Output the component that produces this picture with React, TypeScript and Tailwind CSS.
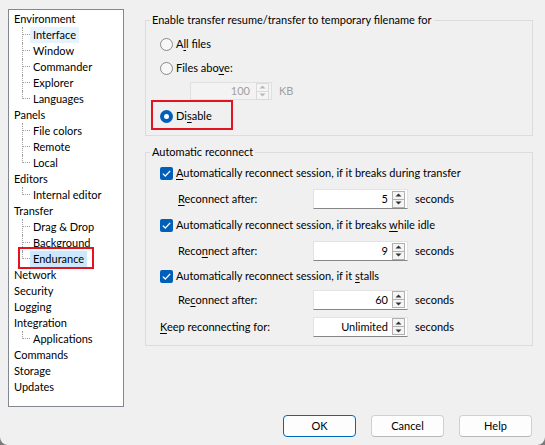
import React from "react";

type TreeNode = { label: string; children?: string[] };

const tree: TreeNode[] = [
  { label: "Environment", children: ["Interface", "Window", "Commander", "Explorer", "Languages"] },
  { label: "Panels", children: ["File colors", "Remote", "Local"] },
  { label: "Editors", children: ["Internal editor"] },
  { label: "Transfer", children: ["Drag & Drop", "Background", "Endurance"] },
  { label: "Network" },
  { label: "Security" },
  { label: "Logging" },
  { label: "Integration", children: ["Applications"] },
  { label: "Commands" },
  { label: "Storage" },
  { label: "Updates" },
];

function ChildRow({ label, last }: { label: string; last: boolean }) {
  const hover = label === "Interface";
  const selected = label === "Endurance";
  return (
    <div className="relative flex h-4 items-start">
      <div className="w-[13px] shrink-0" />
      {last ? (
        <div className="h-[8px] w-[8px] shrink-0 border-b border-l border-dotted border-[#a0a0a0]" />
      ) : (
        <div className="h-4 w-[8px] shrink-0 border-l border-dotted border-[#a0a0a0]">
          <div className="h-[8px] w-[7px] border-b border-dotted border-[#a0a0a0]" />
        </div>
      )}
      <span
        className={
          "h-4 px-[3px] leading-4 " +
          (selected ? "bg-[#cce8ff]" : hover ? "bg-[#e5f3ff]" : "")
        }
      >
        {label}
      </span>
      {selected && (
        <span className="pointer-events-none absolute left-[9px] top-[-4px] h-[22px] w-[76px] border-2 border-[#e3141f]" />
      )}
    </div>
  );
}

function Tree() {
  return (
    <div className="h-[398px] w-[116px] shrink-0 border border-[#828790] bg-white pt-px text-[#000]">
      {tree.map((n) => (
        <div key={n.label}>
          <div className="h-4 pl-[5px] leading-4">{n.label}</div>
          {n.children?.map((c, i) => (
            <ChildRow key={c} label={c} last={i === n.children!.length - 1} />
          ))}
        </div>
      ))}
    </div>
  );
}

function U({ children }: { children: React.ReactNode }) {
  return <span className="underline decoration-1 underline-offset-[2px]">{children}</span>;
}

function Radio({ checked }: { checked?: boolean }) {
  return checked ? (
    <span className="flex h-[13px] w-[13px] shrink-0 items-center justify-center rounded-full bg-[#005fb8]">
      <span className="h-[5px] w-[5px] rounded-full bg-white" />
    </span>
  ) : (
    <span className="h-[13px] w-[13px] shrink-0 rounded-full border border-[#8a8a8a] bg-[#f7f7f7]" />
  );
}

function Check() {
  return (
    <span className="flex h-[13px] w-[13px] shrink-0 items-center justify-center rounded-[2px] bg-[#005fb8]">
      <svg width="9" height="7" viewBox="0 0 9 7" fill="none">
        <path d="M0.8 3.6 L3.3 6 L8.2 0.9" stroke="white" strokeWidth="1.3" />
      </svg>
    </span>
  );
}

function Arrow({ up, color }: { up?: boolean; color: string }) {
  return (
    <svg width="7" height="4" viewBox="0 0 7 4">
      <path d={up ? "M0.5 3.5 L3.5 0.5 L6.5 3.5 Z" : "M0.5 0.5 L3.5 3.5 L6.5 0.5 Z"} fill={color} />
    </svg>
  );
}

function SpinButtons({ disabled }: { disabled?: boolean }) {
  const c = disabled ? "#b8b8b8" : "#333";
  const b = disabled ? "border-[#dadada]" : "border-[#b0b0b0]";
  return (
    <div className="flex shrink-0 flex-col">
      <div className={"flex h-[9px] w-[13px] items-center justify-center border bg-[#f5f5f5] " + b}>
        <Arrow up color={c} />
      </div>
      <div className={"-mt-px flex h-[9px] w-[13px] items-center justify-center border bg-[#f5f5f5] " + b}>
        <Arrow color={c} />
      </div>
    </div>
  );
}

function Spin({ value }: { value: string }) {
  return (
    <div className="flex h-[20px] w-[95px] shrink-0 items-center border border-[#e3e3e3] border-b-[#868686] bg-white pr-[2px]">
      <span className="flex-1 pr-[4px] text-right leading-4">{value}</span>
      <SpinButtons />
    </div>
  );
}

function Row({
  label,
  value,
  className,
  indent = 18,
}: {
  label: React.ReactNode;
  value: string;
  className: string;
  indent?: number;
}) {
  return (
    <div className={"flex items-center " + className}>
      <div className={"w-[153px] shrink-0 " + (indent ? "pl-[18px]" : "")}>{label}</div>
      <Spin value={value} />
      <span className="ml-[7px]">seconds</span>
    </div>
  );
}

function CheckRow({ children, className }: { children: React.ReactNode; className: string }) {
  return (
    <div className={"flex items-center gap-[3px] " + className}>
      <Check />
      <span>{children}</span>
    </div>
  );
}

export default function App() {
  return (
    <div className="h-[445px] w-[545px] bg-[#7a7a7a]">
      <div className="flex h-[445px] w-[545px] flex-col overflow-hidden rounded-b-[8px] bg-[#f0f0f0] font-[family-name:Lato,sans-serif] text-[11px] leading-4 text-black">
        <div className="flex pl-[8px] pt-[9px]">
          <Tree />
          <div className="ml-[21px] mt-[3px] flex w-[388px] flex-col">
            <fieldset className="border border-[#dcdcdc]">
              <legend className="ml-[4px] px-[2px] leading-4">
                Enable transfer resume/transfer to temporary filename for
              </legend>
              <div className="pb-[5px] pl-[14px] pt-[4px]">
                <div className="flex h-[24px] items-center gap-[3px]">
                  <Radio />
                  <span>
                    A<U>l</U>l files
                  </span>
                </div>
                <div className="flex h-[24px] items-center gap-[3px]">
                  <Radio />
                  <span>
                    Files abo<U>v</U>e:
                  </span>
                </div>
                <div className="flex h-[22px] items-center pl-[30px]">
                  <div className="flex h-[18px] w-[82px] items-center border border-[#e0e0e0] bg-[#f3f3f3] pr-[2px]">
                    <span className="flex-1 pr-[6px] text-right text-[#a0a0a0]">100</span>
                    <SpinButtons disabled />
                  </div>
                  <span className="ml-[7px] text-[#a0a0a0]">KB</span>
                </div>
                <div className="relative flex h-[28px] items-center gap-[3px]">
                  <Radio checked />
                  <span>
                    Di<U>s</U>able
                  </span>
                  <span className="pointer-events-none absolute left-[-9px] top-[-2px] h-[30px] w-[82px] border-2 border-[#e3141f]" />
                </div>
              </div>
            </fieldset>
            <fieldset className="mt-[8px] border border-[#dcdcdc]">
              <legend className="ml-[4px] px-[2px] leading-4">Automatic reconnect</legend>
              <div className="pb-[8px] pl-[14px]">
                <CheckRow className="h-[26px]">
                  <U>A</U>utomatically reconnect session, if it breaks during transfer
                </CheckRow>
                <Row
                  className="h-[26px]"
                  value="5"
                  label={
                    <>
                      <U>R</U>econnect after:
                    </>
                  }
                />
                <CheckRow className="h-[26px]">
                  Automatically reconnect session, if it breaks <U>w</U>hile idle
                </CheckRow>
                <Row
                  className="h-[26px]"
                  value="9"
                  label={
                    <>
                      Reco<U>n</U>nect after:
                    </>
                  }
                />
                <CheckRow className="h-[24px]">
                  Automatically reconnect session, if it <U>s</U>talls
                </CheckRow>
                <Row
                  className="h-[23px]"
                  value="60"
                  label={
                    <>
                      Re<U>c</U>onnect after:
                    </>
                  }
                />
                <Row
                  className="mt-[5px] h-[21px]"
                  value="Unlimited"
                  indent={0}
                  label={
                    <>
                      <U>K</U>eep reconnecting for:
                    </>
                  }
                />
              </div>
            </fieldset>
          </div>
        </div>
        <div className="mt-[8px] flex justify-end gap-[15px] pr-[13px]">
          <button className="h-[22px] w-[73px] rounded-[4px] border border-[#0067c0] bg-[#fdfdfd]">
            OK
          </button>
          <button className="h-[22px] w-[73px] rounded-[4px] border border-[#d0d0d0] border-b-[#b8b8b8] bg-[#fdfdfd]">
            Cancel
          </button>
          <button className="h-[22px] w-[73px] rounded-[4px] border border-[#d0d0d0] border-b-[#b8b8b8] bg-[#fdfdfd]">
            Help
          </button>
        </div>
      </div>
    </div>
  );
}
